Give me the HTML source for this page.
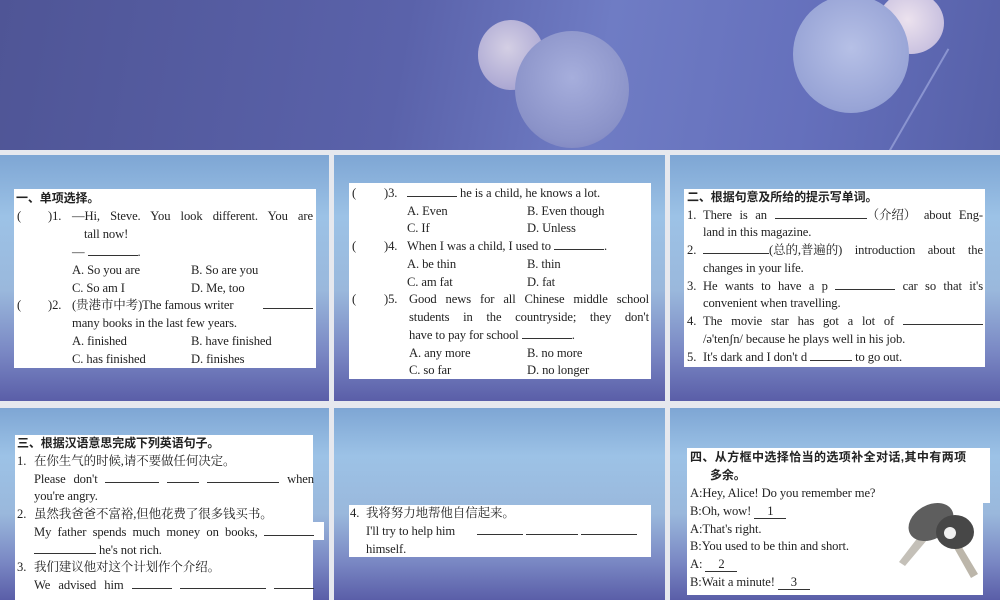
<!DOCTYPE html>
<html><head><meta charset="utf-8"><style>
*{margin:0;padding:0;box-sizing:border-box}
body{width:1000px;height:600px;overflow:hidden;background:#e6e8ee;position:relative;font-family:"Liberation Serif","Noto Serif CJK SC",serif;color:#222}
.ban{position:absolute;left:0;top:0;width:1000px;height:150px;background:linear-gradient(100deg,#4f5596 0%,#5a62aa 40%,#6f7cc4 60%,#6570bc 80%,#5660a8 100%);overflow:hidden}
.sp{position:absolute;border-radius:50%}
.pan{position:absolute;overflow:hidden;background:linear-gradient(180deg,#7ea6d4 0%,#9cc2e6 25%,#9ab8dc 55%,#7a88c4 80%,#5a5ea8 100%)}
.box{position:absolute;background:#fff}
.l{position:absolute;white-space:nowrap;font-size:12.6px;line-height:17px;height:17px;letter-spacing:-0.1px}
.j{text-align:justify;text-align-last:justify;white-space:normal}
.f{display:flex;justify-content:space-between}
.h{font-family:"Liberation Sans","Noto Sans CJK SC",sans-serif;font-weight:bold;font-size:12px}
.c{font-size:12.5px}
u{text-decoration:none;display:inline-block;border-bottom:1px solid #333;height:11px;vertical-align:baseline}
</style></head><body>
<div class="ban">
 <div class="sp" style="left:478px;top:20px;width:66px;height:70px;background:radial-gradient(circle at 45% 40%,#d4cfe4,#aeaad4 70%,#9496c6)"></div>
 <div class="sp" style="left:515px;top:31px;width:114px;height:117px;background:radial-gradient(circle at 50% 40%,#a6aedc,#8a92c8 70%,#7478ba)"></div>
 <div class="sp" style="left:878px;top:-8px;width:66px;height:62px;background:radial-gradient(circle at 45% 45%,#ece2ee,#cac2e0 70%,#aeaad2)"></div>
 <div class="sp" style="left:793px;top:-5px;width:116px;height:118px;background:radial-gradient(circle at 50% 45%,#b6c0e6,#98a4d6 70%,#8290c8)"></div>
 <div style="position:absolute;left:915px;top:40px;width:1.5px;height:130px;background:#8a94d0;transform:rotate(30deg)"></div>
</div>

<div class="pan" style="left:0;top:155px;width:329px;height:246px"></div>
<div class="pan" style="left:334px;top:155px;width:331px;height:246px"></div>
<div class="pan" style="left:670px;top:155px;width:330px;height:246px"></div>
<div class="pan" style="left:0;top:408px;width:329px;height:192px"></div>
<div class="pan" style="left:334px;top:408px;width:331px;height:192px"></div>
<div class="pan" style="left:670px;top:408px;width:330px;height:192px"></div>

<!-- panel 1 -->
<div class="box" style="left:14px;top:189px;width:302px;height:179px"></div>
<div class="l h" style="left:16px;top:190px">一、单项选择。</div>
<div class="l" style="left:17px;top:208px">(</div><div class="l" style="left:48px;top:208px">)1.</div>
<div class="l j" style="left:72px;top:208px;width:241px">—Hi, Steve. You look different. You are</div>
<div class="l" style="left:84px;top:226px">tall now!</div>
<div class="l" style="left:72px;top:244px">— <u style="width:50px"></u>.</div>
<div class="l" style="left:72px;top:262px">A. So you are</div><div class="l" style="left:191px;top:262px">B. So are you</div>
<div class="l" style="left:72px;top:280px">C. So am I</div><div class="l" style="left:191px;top:280px">D. Me, too</div>
<div class="l" style="left:17px;top:297px">(</div><div class="l" style="left:48px;top:297px">)2.</div>
<div class="l" style="left:72px;top:297px"><span class="c">(贵港市中考)</span>The famous writer</div>
<div class="l" style="left:263px;top:297px"><u style="width:50px"></u></div>
<div class="l" style="left:72px;top:315px">many books in the last few years.</div>
<div class="l" style="left:72px;top:333px">A. finished</div><div class="l" style="left:191px;top:333px">B. have finished</div>
<div class="l" style="left:72px;top:351px">C. has finished</div><div class="l" style="left:191px;top:351px">D. finishes</div>

<!-- panel 2 -->
<div class="box" style="left:349px;top:183px;width:302px;height:196px"></div>
<div class="l" style="left:352px;top:185px">(</div><div class="l" style="left:384px;top:185px">)3.</div>
<div class="l" style="left:407px;top:185px"><u style="width:50px"></u> he is a child, he knows a lot.</div>
<div class="l" style="left:407px;top:203px">A. Even</div><div class="l" style="left:527px;top:203px">B. Even though</div>
<div class="l" style="left:407px;top:220px">C. If</div><div class="l" style="left:527px;top:220px">D. Unless</div>
<div class="l" style="left:352px;top:238px">(</div><div class="l" style="left:384px;top:238px">)4.</div>
<div class="l" style="left:407px;top:238px">When I was a child, I used to <u style="width:50px"></u>.</div>
<div class="l" style="left:407px;top:256px">A. be thin</div><div class="l" style="left:527px;top:256px">B. thin</div>
<div class="l" style="left:407px;top:274px">C. am fat</div><div class="l" style="left:527px;top:274px">D. fat</div>
<div class="l" style="left:352px;top:291px">(</div><div class="l" style="left:384px;top:291px">)5.</div>
<div class="l j" style="left:409px;top:291px;width:240px">Good news for all Chinese middle school</div>
<div class="l j" style="left:409px;top:309px;width:240px">students in the countryside; they don't</div>
<div class="l" style="left:409px;top:327px">have to pay for school <u style="width:50px"></u>.</div>
<div class="l" style="left:409px;top:345px">A. any more</div><div class="l" style="left:527px;top:345px">B. no more</div>
<div class="l" style="left:409px;top:362px">C. so far</div><div class="l" style="left:527px;top:362px">D. no longer</div>

<!-- panel 3 -->
<div class="box" style="left:684px;top:189px;width:301px;height:178px"></div>
<div class="l h" style="left:687px;top:189px">二、根据句意及所给的提示写单词。</div>
<div class="l" style="left:687px;top:207px">1.</div>
<div class="l f" style="left:703px;top:207px;width:280px"><span>There</span><span>is</span><span>an</span><span><u style="width:92px"></u><span class="c">（介绍）</span></span><span>about</span><span>Eng-</span></div>
<div class="l" style="left:703px;top:224px">land in this magazine.</div>
<div class="l" style="left:687px;top:242px">2.</div>
<div class="l f" style="left:703px;top:242px;width:280px"><span><u style="width:66px"></u><span class="c">(总的,普遍的)</span></span><span>introduction</span><span>about</span><span>the</span></div>
<div class="l" style="left:703px;top:260px">changes in your life.</div>
<div class="l" style="left:687px;top:278px">3.</div>
<div class="l j" style="left:703px;top:278px;width:280px">He wants to have a p <u style="width:60px"></u> car so that it's</div>
<div class="l" style="left:703px;top:295px">convenient when travelling.</div>
<div class="l" style="left:687px;top:313px">4.</div>
<div class="l j" style="left:703px;top:313px;width:280px">The movie star has got a lot of <u style="width:80px"></u></div>
<div class="l" style="left:703px;top:331px">/ə'tenʃn/ because he plays well in his job.</div>
<div class="l" style="left:687px;top:349px">5.</div>
<div class="l" style="left:703px;top:349px">It's dark and I don't d <u style="width:42px"></u> to go out.</div>

<!-- panel 4 -->
<div class="box" style="left:15px;top:435px;width:298px;height:165px"></div>
<div class="box" style="left:312px;top:522px;width:12px;height:18px"></div>
<div class="l h" style="left:17px;top:435px">三、根据汉语意思完成下列英语句子。</div>
<div class="l" style="left:17px;top:453px">1.</div><div class="l c" style="left:34px;top:453px">在你生气的时候,请不要做任何决定。</div>
<div class="l j" style="left:34px;top:471px;width:280px">Please don't <u style="width:54px"></u> <u style="width:32px"></u> <u style="width:72px"></u> when</div>
<div class="l" style="left:34px;top:488px">you're angry.</div>
<div class="l" style="left:17px;top:506px">2.</div><div class="l c" style="left:34px;top:506px">虽然我爸爸不富裕,但他花费了很多钱买书。</div>
<div class="l f" style="left:34px;top:524px;width:280px"><span>My</span><span>father</span><span>spends</span><span>much</span><span>money</span><span>on</span><span>books,</span><span><u style="width:50px"></u></span></div>
<div class="l" style="left:34px;top:542px"><u style="width:62px"></u> he's not rich.</div>
<div class="l" style="left:17px;top:559px">3.</div><div class="l c" style="left:34px;top:559px">我们建议他对这个计划作个介绍。</div>
<div class="l j" style="left:34px;top:577px;width:280px">We advised him <u style="width:40px"></u> <u style="width:86px"></u> <u style="width:40px"></u></div>

<!-- panel 5 -->
<div class="box" style="left:349px;top:505px;width:302px;height:52px"></div>
<div class="l" style="left:350px;top:505px">4.</div><div class="l c" style="left:366px;top:505px">我将努力地帮他自信起来。</div>
<div class="l" style="left:366px;top:523px">I'll try to help him</div>
<div class="l" style="left:477px;top:523px"><u style="width:46px"></u> <u style="width:52px"></u> <u style="width:56px"></u></div>
<div class="l" style="left:366px;top:541px">himself.</div>

<!-- panel 6 -->
<div class="box" style="left:687px;top:448px;width:303px;height:55px"></div>
<div class="box" style="left:687px;top:502px;width:296px;height:93px"></div>
<div class="l h" style="left:690px;top:449px;letter-spacing:0.4px">四、从方框中选择恰当的选项补全对话,其中有两项</div>
<div class="l h" style="left:710px;top:467px">多余。</div>
<div class="l" style="left:690px;top:485px">A:Hey, Alice! Do you remember me?</div>
<div class="l" style="left:690px;top:503px">B:Oh, wow! <u style="width:32px;text-align:center;height:13px;line-height:11px">1</u></div>
<div class="l" style="left:690px;top:521px">A:That's right.</div>
<div class="l" style="left:690px;top:538px">B:You used to be thin and short.</div>
<div class="l" style="left:690px;top:556px">A: <u style="width:32px;text-align:center;height:13px;line-height:11px">2</u></div>
<div class="l" style="left:690px;top:574px">B:Wait a minute! <u style="width:32px;text-align:center;height:13px;line-height:11px">3</u></div>
<svg style="position:absolute;left:893px;top:500px" width="95" height="85" viewBox="0 0 95 85">
 <path d="M26 36 L6 62 L12 66 L34 40 Z" fill="#c4c0b8"/>
 <ellipse cx="38" cy="22" rx="24" ry="17" transform="rotate(-30 38 22)" fill="#5e5e5e"/>
 <path d="M60 46 L78 78 L85 74 L67 44 Z" fill="#bcb6aa"/>
 <ellipse cx="62" cy="32" rx="19" ry="17" fill="#474747"/>
 <circle cx="57" cy="33" r="6" fill="#f0f0f0"/>
</svg>
</body></html>
